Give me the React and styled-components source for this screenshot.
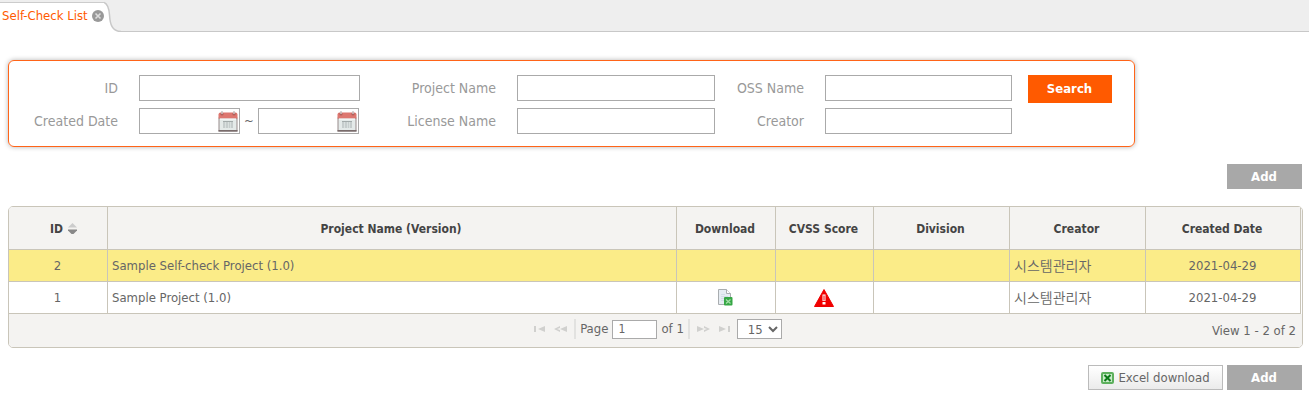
import React from "react";
import styled, { createGlobalStyle, css } from "styled-components";

const font = `"DejaVu Sans Condensed", "Noto Sans", "Noto Sans CJK KR", sans-serif`;
const line = "#c9c5b9";
const panel = "#f4f3f1";

const GlobalStyle = createGlobalStyle`
  *, *::before, *::after { box-sizing: border-box; }
  body { margin: 0; background: #fff; color: #666; font: 13px/16px ${font}; }
  button, input, select { font: inherit; color: inherit; margin: 0; border-radius: 0; }
`;

const TabBar = styled.nav`
  display: flex;
  height: 32px;
  background: #eee;
  border-bottom: 1px solid #c8c8c8;
`;

const Tab = styled.div`
  display: flex;
  align-items: center;
  gap: 4px;
  height: 32px;
  margin-bottom: -1px;
  padding-left: 2px;
  background: linear-gradient(#eee 2px, #ccc 2px, #ccc 3px, #fff 3px);
`;

const TabLink = styled.a`
  color: #ff5a00;
  text-decoration: none;
`;

const IconButton = styled.button`
  display: flex;
  flex: none;
  padding: 0;
  border: 0;
  background: none;
  cursor: pointer;
`;

const TabEdge = styled.svg`
  flex: none;
  margin-bottom: -1px;
`;

const Page = styled.main`
  padding: 28px 6px 10px 8px;
`;

const SearchPanel = styled.form`
  display: flex;
  align-items: flex-start;
  gap: 16px;
  max-width: 1127px;
  padding: 14px 22px 12px 0;
  border: 1px solid #ff6418;
  border-radius: 6px;
  box-shadow: 0 0 5px rgba(0, 0, 0, 0.3);
`;

const Fields = styled.div`
  display: grid;
  flex: 1;
  grid-template-columns: 130px 221fr 157px 198fr 110px 187fr;
  grid-auto-rows: 26px;
  row-gap: 7px;
  align-items: center;
`;

const Label = styled.label`
  padding-right: 21px;
  color: #999;
  font-size: 14px;
  text-align: right;
`;

const TextInput = styled.input`
  width: 100%;
  min-width: 0;
  height: 26px;
  padding: 0 6px;
  border: 1px solid #aaa;
  background: #fff;
`;

const DateRange = styled.div`
  display: flex;
  align-items: center;
  justify-content: space-between;
  padding-right: 1px;
`;

const DateBox = styled.div`
  display: flex;
  align-items: center;
  width: 101px;
  height: 26px;
  padding-right: 1px;
  border: 1px solid #aaa;

  input {
    flex: 1;
    min-width: 0;
    height: 24px;
    border: 0;
    padding: 0 4px;
    background: none;
  }
`;

const Button = styled.button`
  height: 25px;
  width: 75px;
  padding: 0 1px 0 0;
  border: 0;
  background: #a8a8a8;
  color: #fff;
  font-weight: 700;
  cursor: pointer;
  ${(p) =>
    p.$primary &&
    css`
      width: 84px;
      height: 28px;
      background: #ff5a00;
    `}
`;

const ExcelButton = styled.button`
  display: flex;
  align-items: center;
  justify-content: center;
  gap: 4px;
  width: 135px;
  height: 25px;
  padding: 0;
  border: 1px solid #bbb;
  background: linear-gradient(#fff, #ebebeb);
  cursor: pointer;
`;

const Actions = styled.div`
  display: flex;
  justify-content: flex-end;
  gap: 4px;
  margin: 17px 1px 17px 0;
`;

const Grid = styled.section`
  overflow: hidden;
  border: 1px solid ${line};
  border-radius: 5px;
`;

const TableWrap = styled.div`
  padding-right: 1px;
  background: linear-gradient(${panel} 42px, ${line} 42px, ${line} 43px, #fff 43px);
`;

const Table = styled.table`
  width: 100%;
  table-layout: fixed;
  border-collapse: separate;
  border-spacing: 0;
`;

const HeadCell = styled.th`
  height: 43px;
  padding: 1px 6px 0 4px;
  border-right: 1px solid ${line};
  border-bottom: 1px solid ${line};
  background: ${panel};
  color: #444;
  font-size: 12px;
  font-weight: 700;
`;

const SortLabel = styled.span`
  display: inline-flex;
  align-items: center;
  gap: 5px;
  padding-left: 13px;
`;

const Row = styled.tr`
  background: ${(p) => (p.$selected ? "#fbec88" : "#fff")};
`;

const Cell = styled.td`
  height: 32px;
  padding: 0 5px 0 4px;
  border-right: 1px solid ${line};
  border-bottom: 1px solid ${line};
  text-align: ${(p) => p.$align || "center"};

  ${IconButton}, svg { display: block; margin: 0 auto; }
`;

const PersonName = styled.span`
  font-family: "Noto Sans CJK KR", sans-serif;
  font-size: 14px;
  font-weight: 350;
`;

const Pager = styled.footer`
  display: grid;
  grid-template-columns: 1fr auto 1fr;
  align-items: center;
  height: 33px;
  padding: 0 6px 3px;
  background: ${panel};
`;

const PagerControls = styled.div`
  display: flex;
  grid-column: 2;
  align-items: center;
  gap: 4px;
  padding-left: 2px;
`;

const PagerArrows = styled.div`
  display: flex;
  gap: 9px;
  padding: 0 3px;
`;

const Separator = styled.span`
  width: 2px;
  height: 20px;
  background: #e2e2e0;
`;

const PageInput = styled(TextInput)`
  width: 45px;
  height: 19px;
  padding: 0 5px;
  font-size: 12px;
`;

const PageSize = styled.select`
  width: 45px;
  height: 20px;
  padding: 0 0 0 6px;
  border: 1px solid #aaa;
  background: #fff;
`;

const Summary = styled.span`
  padding-top: 3px;
  text-align: right;
`;

const CloseIcon = () => (
  <svg width="12" height="12" viewBox="0 0 12 12">
    <circle cx="6" cy="6" r="6" fill="#999" />
    <path d="M3.5 3.5l5 5M8.5 3.5l-5 5" stroke="#ddd" strokeWidth="1.6" />
  </svg>
);

const CalendarIcon = () => (
  <svg width="20" height="21" viewBox="0 0 20 21">
    <rect x="1" y="7" width="18" height="13" fill="#e4eae9" stroke="#978b8b" />
    <path d="M.5 19.8h19" stroke="#776868" strokeWidth="1.5" />
    <path d="M.5 3.5q0-2 2-2h15q2 0 2 2v4H.5z" fill="#dd7770" />
    <path d="M2 8h16" stroke="#fff" />
    <rect x="5" y="10" width="10" height="7" fill="#c6cdcd" />
    <path d="M7.500 11v6M10.500 11v6M12.500 11v6" stroke="#d9e0df" />
    <path d="M5 10.500h10" stroke="#a3abab" />
    <circle cx="4" cy="3" r="1.6" fill="#b0605c" />
    <circle cx="16" cy="3" r="1.6" fill="#b0605c" />
    <path d="M4 0v3M16 0v3" stroke="#c9c3c3" strokeWidth="1.5" />
  </svg>
);

const SortIcon = () => (
  <svg width="9" height="11" viewBox="0 0 9 11">
    <path d="M0 4.5L4.5 0 9 4.5z" fill="#ccc" />
    <path d="M0 6.5h9v1L5.500 11h-2L0 7.500z" fill="#888" />
  </svg>
);

const FileIcon = () => (
  <svg width="15" height="17" viewBox="0 0 15 17">
    <path d="M.5.5h8l4 4v11H.5z" fill="#e6ecf2" stroke="#a9adb0" />
    <path d="M8.5.5v4h4" fill="#fff" stroke="#a9adb0" />
    <path d="M3 5.5h4M3 7.5h7M3 9.5h4M3 11.5h3" stroke="#d3dde6" />
    <rect x="6" y="8" width="8.500" height="8.500" rx="1" fill="#36a745" />
    <path d="M8 10.500l4.500 4M12.500 10.500l-4.500 4" stroke="#a5dfa8" strokeWidth="1.300" />
  </svg>
);

const WarningIcon = () => (
  <svg width="20" height="18" viewBox="0 0 20 18">
    <path d="M10 .5L19.500 17.500H.5z" fill="#f20000" stroke="#e00" strokeLinejoin="round" />
    <path d="M8.500 5.500h3v6.500h-3zM8.500 13h3v2.500h-3z" fill="#fff" />
    <path d="M10 6.500v5" stroke="#e00" />
  </svg>
);

const ExcelIcon = () => (
  <svg width="13" height="12" viewBox="0 0 13 12">
    <rect x="1" y="1" width="11" height="10" rx="1" fill="#c8ecc8" stroke="#5db05d" strokeWidth="2" />
    <path d="M3.500 3l6 6M9.500 3l-6 6" stroke="#0c7a18" strokeWidth="2" />
  </svg>
);

const arrowShapes = {
  first: "M0 2h2v6H0zM11 2v6L4 5z",
  prev: "M6 2v2L3 5l3 1v2L0 5zM13 2v6L6 5z",
  next: "M0 2v6l7-3zM7 2v2l3 1-3 1v2l6-3z",
  last: "M0 2v6l7-3zM9 2h2v6H9z",
};

const Arrow = ({ kind, label }) => {
  const width = kind === "first" || kind === "last" ? 11 : 13;
  return (
    <IconButton type="button" aria-label={label}>
      <svg width={width} height="10" viewBox={`0 0 ${width} 10`}>
        <path d={arrowShapes[kind]} fill="#d0d0ce" />
      </svg>
    </IconButton>
  );
};

const DateField = ({ id, label }) => (
  <DateBox>
    <input id={id} type="text" aria-label={label} />
    <IconButton type="button" aria-label={`Choose ${label}`}>
      <CalendarIcon />
    </IconButton>
  </DateBox>
);

const Field = ({ id, label }) => (
  <>
    <Label htmlFor={id}>{label}</Label>
    <TextInput id={id} type="text" />
  </>
);

const columns = [
  { title: "ID", width: 99 },
  { title: "Project Name (Version)" },
  { title: "Download", width: 99 },
  { title: "CVSS Score", width: 98 },
  { title: "Division", width: 136 },
  { title: "Creator", width: 136 },
  { title: "Created Date", width: 155 },
];

const projects = [
  { id: 2, name: "Sample Self-check Project (1.0)", creator: "시스템관리자", date: "2021-04-29", selected: true },
  { id: 1, name: "Sample Project (1.0)", creator: "시스템관리자", date: "2021-04-29", report: true },
];

export default function App() {
  return (
    <>
      <GlobalStyle />
      <TabBar>
        <Tab>
          <TabLink href="#self-check">Self-Check List</TabLink>
          <IconButton type="button" aria-label="Close tab">
            <CloseIcon />
          </IconButton>
        </Tab>
        <TabEdge width="17" height="32" viewBox="0 0 17 32">
          <path d="M0 2.500C4 4 5 8 5.500 15C6 24 8 31.500 17 31.500V32H0z" fill="#fff" />
          <path d="M0 2.500C4 4 5 8 5.500 15C6 24 8 31.500 17 31.500" fill="none" stroke="#c8c8c8" strokeWidth="1.500" />
        </TabEdge>
      </TabBar>
      <Page>
        <SearchPanel onSubmit={(e) => e.preventDefault()}>
          <Fields>
            <Field id="project-id" label="ID" />
            <Field id="project-name" label="Project Name" />
            <Field id="oss-name" label="OSS Name" />
            <Label htmlFor="date-from">Created Date</Label>
            <DateRange>
              <DateField id="date-from" label="start date" />
              <span>~</span>
              <DateField id="date-to" label="end date" />
            </DateRange>
            <Field id="license-name" label="License Name" />
            <Field id="creator" label="Creator" />
          </Fields>
          <Button type="submit" $primary>Search</Button>
        </SearchPanel>
        <Actions>
          <Button type="button">Add</Button>
        </Actions>
        <Grid>
          <TableWrap>
            <Table>
              <colgroup>
                {columns.map((c) => (
                  <col key={c.title} width={c.width} />
                ))}
              </colgroup>
              <thead>
                <tr>
                  {columns.map((c) => (
                    <HeadCell key={c.title} scope="col">
                      {c.title === "ID" ? (
                        <SortLabel>
                          ID <SortIcon />
                        </SortLabel>
                      ) : (
                        c.title
                      )}
                    </HeadCell>
                  ))}
                </tr>
              </thead>
              <tbody>
                {projects.map((p) => (
                  <Row key={p.id} $selected={p.selected}>
                    <Cell>{p.id}</Cell>
                    <Cell $align="left">{p.name}</Cell>
                    <Cell>
                      {p.report && (
                        <IconButton type="button" aria-label="Download report">
                          <FileIcon />
                        </IconButton>
                      )}
                    </Cell>
                    <Cell>{p.report && <WarningIcon />}</Cell>
                    <Cell />
                    <Cell $align="left">
                      <PersonName>{p.creator}</PersonName>
                    </Cell>
                    <Cell>{p.date}</Cell>
                  </Row>
                ))}
              </tbody>
            </Table>
          </TableWrap>
          <Pager>
            <PagerControls>
              <PagerArrows>
                <Arrow kind="first" label="First page" />
                <Arrow kind="prev" label="Previous page" />
              </PagerArrows>
              <Separator />
              <label htmlFor="page-number">Page</label>
              <PageInput id="page-number" type="text" defaultValue="1" />
              <span>of 1</span>
              <Separator />
              <PagerArrows>
                <Arrow kind="next" label="Next page" />
                <Arrow kind="last" label="Last page" />
              </PagerArrows>
              <PageSize aria-label="Rows per page" defaultValue="15">
                <option>15</option>
                <option>30</option>
              </PageSize>
            </PagerControls>
            <Summary>View 1 - 2 of 2</Summary>
          </Pager>
        </Grid>
        <Actions>
          <ExcelButton type="button">
            <ExcelIcon />
            Excel download
          </ExcelButton>
          <Button type="button">Add</Button>
        </Actions>
      </Page>
    </>
  );
}
